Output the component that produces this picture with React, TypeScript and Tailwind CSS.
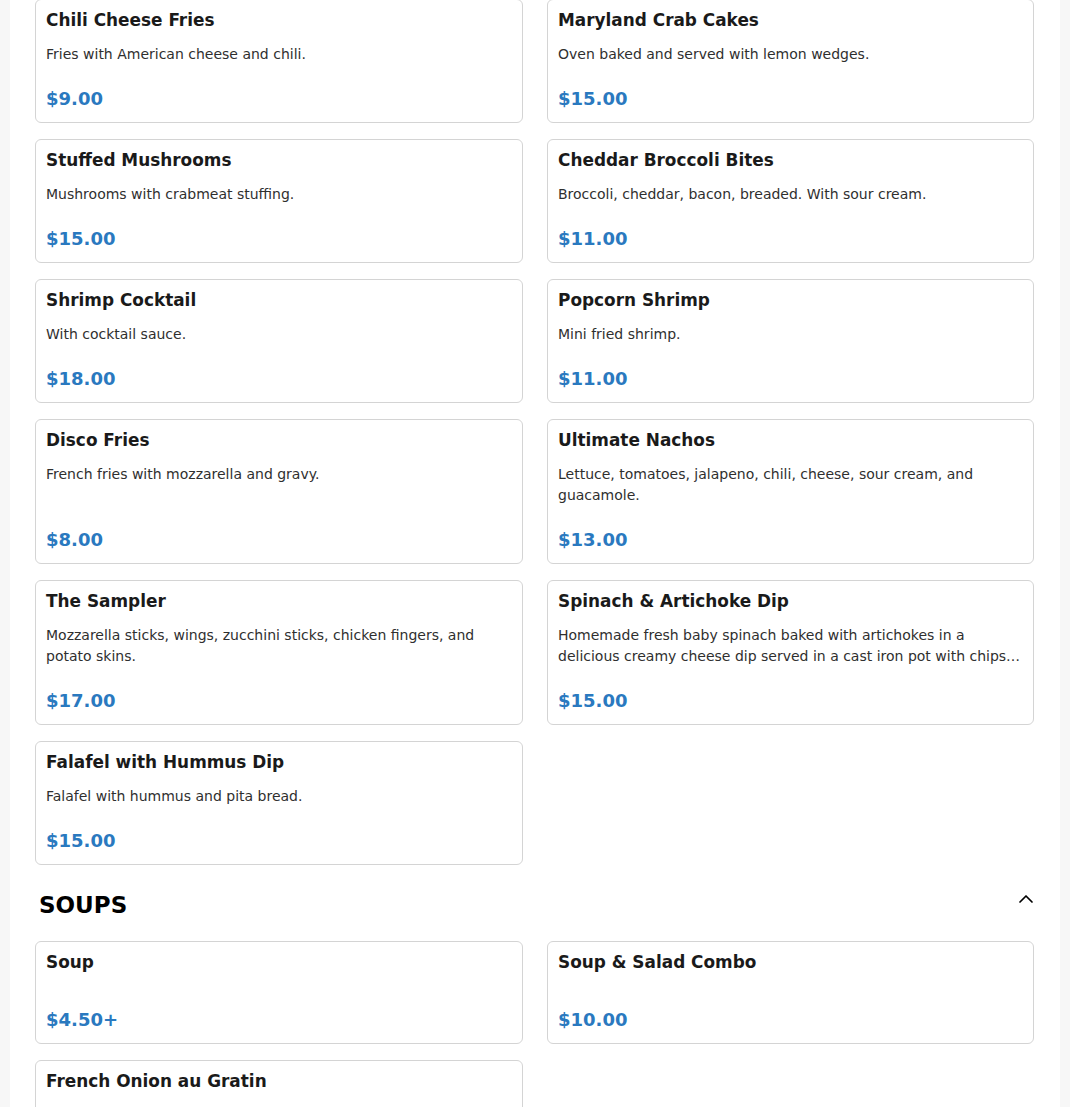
import React from "react";
import { ChevronUp } from "lucide-react";

type Item = { name: string; desc?: string; price: string };

const appetizers: Item[] = [
  { name: "Chili Cheese Fries", desc: "Fries with American cheese and chili.", price: "$9.00" },
  { name: "Maryland Crab Cakes", desc: "Oven baked and served with lemon wedges.", price: "$15.00" },
  { name: "Stuffed Mushrooms", desc: "Mushrooms with crabmeat stuffing.", price: "$15.00" },
  { name: "Cheddar Broccoli Bites", desc: "Broccoli, cheddar, bacon, breaded. With sour cream.", price: "$11.00" },
  { name: "Shrimp Cocktail", desc: "With cocktail sauce.", price: "$18.00" },
  { name: "Popcorn Shrimp", desc: "Mini fried shrimp.", price: "$11.00" },
  { name: "Disco Fries", desc: "French fries with mozzarella and gravy.", price: "$8.00" },
  {
    name: "Ultimate Nachos",
    desc: "Lettuce, tomatoes, jalapeno, chili, cheese, sour cream, and guacamole.",
    price: "$13.00",
  },
  {
    name: "The Sampler",
    desc: "Mozzarella sticks, wings, zucchini sticks, chicken fingers, and potato skins.",
    price: "$17.00",
  },
  {
    name: "Spinach & Artichoke Dip",
    desc: "Homemade fresh baby spinach baked with artichokes in a delicious creamy cheese dip served in a cast iron pot with chips and salsa.",
    price: "$15.00",
  },
  { name: "Falafel with Hummus Dip", desc: "Falafel with hummus and pita bread.", price: "$15.00" },
];

const soups: Item[] = [
  { name: "Soup", price: "$4.50+" },
  { name: "Soup & Salad Combo", price: "$10.00" },
  { name: "French Onion au Gratin", desc: "Topped with melted Swiss cheese and croutons.", price: "$8.00" },
];

const MenuCard = ({ item }: { item: Item }) => {
  return (
    <div className="flex flex-col rounded-[6px] border border-[#d4d4d4] bg-white p-[10px]">
      <h3 className="text-[16.9px] font-bold leading-[21px] text-[#1a1a1a]">{item.name}</h3>
      <p className="mb-5 mt-[13px] line-clamp-2 text-[14px] leading-[21px] text-[#2f2f2f]">
        {item.desc}
      </p>
      <div className="mt-auto text-[18px] font-bold leading-[27px] text-[#2a79bf]">{item.price}</div>
    </div>
  );
};

const Grid = ({ items }: { items: Item[] }) => (
  <div className="grid grid-cols-[488px_487px] gap-x-6 gap-y-4">
    {items.map((item) => (
      <MenuCard key={item.name} item={item} />
    ))}
  </div>
);

const Section = ({ title, items }: { title: string; items: Item[] }) => {
  return (
    <section>
      <div className="mb-[22px] mt-[26px] flex h-[28px] items-center justify-between pl-1">
        <h2 className="text-[23px] font-bold leading-[28px] text-black">{title}</h2>
        <ChevronUp size={24} strokeWidth={1.75} className="-mr-1 -mt-3 text-black" />
      </div>
      <Grid items={items} />
    </section>
  );
};

export default function App() {
  return (
    <div className="min-h-screen bg-[#f7f7f7] px-[10px] font-['DejaVu_Sans',sans-serif]">
      <div className="bg-white pb-10 pl-[25px] pr-[26px]">
        <div className="-mt-px">
          <Grid items={appetizers} />
        </div>
        <Section title="SOUPS" items={soups} />
      </div>
    </div>
  );
}
